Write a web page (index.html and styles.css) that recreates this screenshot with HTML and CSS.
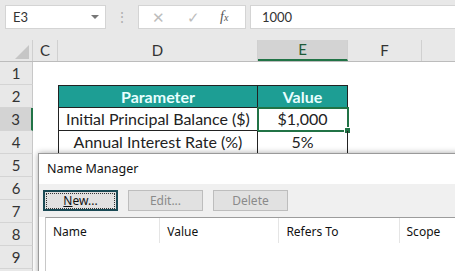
FILE: index.html
```html
<!DOCTYPE html>
<html lang="en">
<head>
    <meta charset="UTF-8">
    <title>Name Manager</title>
    <link rel="stylesheet" href="styles.css">
</head>
<body>
    <div class="topbar">
        <div class="namebox">
            <span>E3</span>
            <span class="caret"></span>
        </div>
        <div class="grip">⋮</div>
        <div class="fx-group">
            <span class="fx-btn cancel">✕</span>
            <span class="fx-btn ok">✓</span>
            <span class="fx-btn fx"><i>f</i><i class="x">x</i></span>
        </div>
        <div class="formula">1000</div>
    </div>

    <div class="sheet">
        <div class="row col-head">
            <div class="corner"><span class="tri"></span></div>
            <div class="ch">C</div>
            <div class="ch">D</div>
            <div class="ch active">E</div>
            <div class="ch">F</div>
            <div class="ch last"></div>
        </div>
        <div class="row">
            <div class="rh">1</div>
            <div></div><div></div><div></div><div></div><div></div>
        </div>
        <div class="row">
            <div class="rh">2</div>
            <div></div>
            <div class="cell th first-col top">Parameter</div>
            <div class="cell th top">Value</div>
            <div></div><div></div>
        </div>
        <div class="row">
            <div class="rh active">3</div>
            <div></div>
            <div class="cell first-col">Initial Principal Balance ($)</div>
            <div class="cell selected">$1,000<span class="handle"></span></div>
            <div></div><div></div>
        </div>
        <div class="row">
            <div class="rh">4</div>
            <div></div>
            <div class="cell first-col">Annual Interest Rate (%)</div>
            <div class="cell">5%</div>
            <div></div><div></div>
        </div>
        <div class="row"><div class="rh">5</div></div>
        <div class="row"><div class="rh">6</div></div>
        <div class="row"><div class="rh">7</div></div>
        <div class="row"><div class="rh">8</div></div>
        <div class="row"><div class="rh">9</div></div>
        <div class="row"><div class="rh"></div></div>

        <div class="dialog">
            <div class="dlg-title">Name Manager</div>
            <div class="dlg-tools">
                <button class="btn focus"><span><u>N</u>ew...</span></button>
                <button class="btn" disabled>Edit...</button>
                <button class="btn" disabled>Delete</button>
            </div>
            <div class="list">
                <div class="list-head">
                    <div class="lc c-name">Name</div>
                    <div class="lc c-value">Value</div>
                    <div class="lc c-refers">Refers To</div>
                    <div class="lc c-scope">Scope</div>
                </div>
            </div>
        </div>
    </div>
</body>
</html>
```

FILE: styles.css
```css
body {
    margin: 0;
    width: 455px;
    height: 271px;
    overflow: hidden;
    background-color: white;
    font-family: "Lato", "Liberation Sans", sans-serif;
    color: #222;
}

/* formula bar */
.topbar {
    height: 40px;
    background-color: #e8e8e8;
    display: flex;
    align-items: flex-start;
    padding-top: 5px;
    box-sizing: border-box;
}

.namebox {
    margin-left: 5px;
    width: 101px;
    height: 24px;
    background-color: white;
    border: 1px solid #d4d4d4;
    box-sizing: border-box;
    display: flex;
    align-items: center;
    justify-content: space-between;
    padding: 0 6px 0 7px;
    font-size: 13px;
    color: #333;
}

.caret {
    width: 0;
    height: 0;
    border-left: 4px solid transparent;
    border-right: 4px solid transparent;
    border-top: 4px solid #777;
}

.grip {
    width: 32px;
    text-align: center;
    color: #b0b0b0;
    font-size: 14px;
    line-height: 24px;
}

.fx-group {
    width: 108px;
    height: 24px;
    background-color: white;
    border: 1px solid #d4d4d4;
    box-sizing: border-box;
    display: flex;
    align-items: center;
}

.fx-btn {
    color: #bdbdbd;
    font-size: 15px;
}

.cancel {
    margin-left: 13px;
}

.ok {
    margin-left: 22px;
}

.fx {
    margin-left: 20px;
    color: #555;
    font-family: "Liberation Serif", serif;
    font-size: 14px;
}

.fx .x {
    font-size: 10px;
}

.formula {
    margin-left: 4px;
    flex: 1;
    height: 24px;
    background-color: white;
    border: 1px solid #d4d4d4;
    border-right: none;
    box-sizing: border-box;
    padding-left: 11px;
    font-size: 13px;
    line-height: 22px;
    color: #333;
}

/* grid */
.sheet {
    position: relative;
}

.row {
    display: grid;
    grid-template-columns: 33px 25px 200px 90px 74px 1fr;
    height: 23px;
}

.col-head {
    height: 22px;
    background-color: #e8e8e8;
    border-bottom: 1px solid #bcbcbc;
    box-sizing: border-box;
}

.corner {
    border-right: 1px solid #cfcfcf;
    position: relative;
}

.tri {
    position: absolute;
    right: 3px;
    bottom: 2px;
    width: 0;
    height: 0;
    border-left: 14px solid transparent;
    border-bottom: 14px solid #c6c6c6;
}

.ch {
    font-size: 15px;
    color: #333;
    text-align: center;
    line-height: 21px;
    border-right: 1px solid #d0d0d0;
}

.ch.last {
    border-right: none;
}

.ch.active {
    background-color: #d3d3d3;
    border-bottom: 2px solid #217346;
    line-height: 19px;
    color: #1e5a38;
}

.rh {
    background-color: #e8e8e8;
    border-right: 1px solid #c8c8c8;
    border-bottom: 1px solid #d4d4d4;
    text-align: center;
    font-size: 15px;
    line-height: 22px;
    color: #333;
}

.rh.active {
    background-color: #d3d3d3;
    border-right: 2px solid #217346;
}

.cell {
    font-size: 16px;
    text-align: center;
    line-height: 22px;
    border-right: 1px solid #222;
    border-bottom: 1px solid #222;
    position: relative;
}

.cell.first-col {
    border-left: 1px solid #222;
}

.cell.top {
    border-top: 1px solid #222;
}

.th {
    background-color: #1d9e94;
    color: #e8ffff;
    font-weight: bold;
    line-height: 21px;
}

.cell.selected {
    outline: 2px solid #217346;
    outline-offset: -1px;
}

.handle {
    position: absolute;
    right: -4px;
    bottom: -4px;
    width: 5px;
    height: 5px;
    background-color: #217346;
    border: 1px solid white;
}

/* Name Manager dialog */
.dialog {
    position: absolute;
    left: 38px;
    top: 113px;
    width: 440px;
    height: 200px;
    background-color: white;
    border: 1px solid #9a9a9a;
    box-shadow: 0 0 6px rgba(0, 0, 0, 0.35);
    font-family: "Noto Sans", "Liberation Sans", sans-serif;
}

.dlg-title {
    height: 30px;
    padding-left: 8px;
    font-size: 12.5px;
    line-height: 30px;
    color: #111;
}

.dlg-tools {
    height: 33px;
    background-color: #f0f0f0;
    display: flex;
    align-items: center;
    gap: 10px;
    padding-left: 4px;
    box-sizing: border-box;
}

.btn {
    width: 75px;
    height: 21px;
    background-color: #e1e1e1;
    border: 1px solid #bdbdbd;
    font-family: "Noto Sans", "Liberation Sans", sans-serif;
    font-size: 12px;
    color: #8a8a8a;
    padding: 0;
}

.btn.focus {
    border: 2px solid #1a4a55;
    color: #111;
    background-color: #e1e1e1;
}

.btn.focus span {
    display: block;
    margin: 1px;
    border: 1px dotted #333;
    line-height: 14px;
}

.list {
    margin-left: 6px;
    height: 200px;
    border-top: 1px solid #9c9c9c;
    border-left: 1px solid #c8c8c8;
}

.list-head {
    display: flex;
    height: 29px;
    font-size: 12px;
    line-height: 27px;
    color: #111;
}

.lc {
    padding-left: 7px;
    box-sizing: border-box;
    border-right: 1px solid #e5e5e5;
    height: 25px;
}

.c-name {
    width: 115px;
}

.c-value {
    width: 120px;
}

.c-refers {
    width: 121px;
}

.c-scope {
    width: 80px;
    border-right: none;
}
```
